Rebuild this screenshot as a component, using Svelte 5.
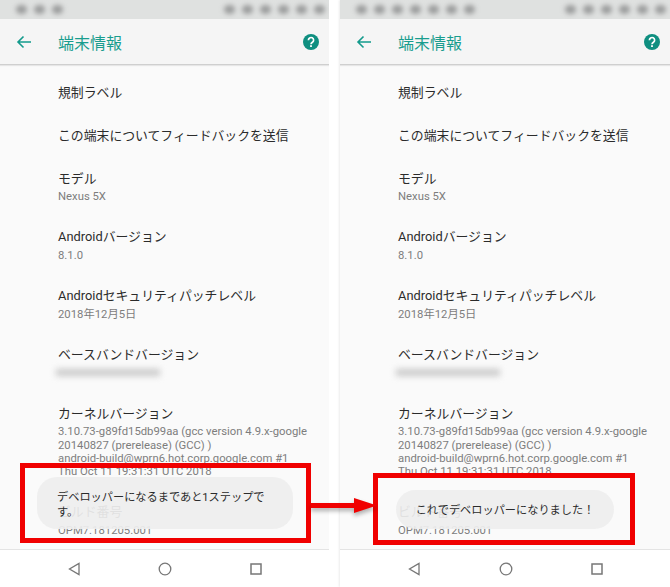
<script>
	const rows = [
		{ label: '規制ラベル' },
		{ label: 'この端末についてフィードバックを送信' },
		{ label: 'モデル', lines: ['Nexus 5X'] },
		{ label: 'Androidバージョン', lines: ['8.1.0'] },
		{ label: 'Androidセキュリティパッチレベル', lines: ['2018年12月5日'] },
		{ label: 'ベースバンドバージョン', blurred: true },
		{
			label: 'カーネルバージョン',
			lines: [
				'3.10.73-g89fd15db99aa (gcc version 4.9.x-google',
				'20140827 (prerelease) (GCC) )',
				'android-build@wprn6.hot.corp.google.com #1',
				'Thu Oct 11 19:31:31 UTC 2018'
			]
		},
		{ label: 'ビルド番号', lines: ['OPM7.181205.001'] }
	]
</script>

{#snippet phone(side, toast)}
	<section class="phone {side}">
		<div class="statusbar">
			<div class="blobs">
				{#each { length: side === 'left' ? 3 : 7 } as _}
					<i></i>
				{/each}
			</div>
			<div class="blobs">
				{#each { length: 6 } as _}
					<i></i>
				{/each}
			</div>
		</div>
		<header class="toolbar">
			<svg class="back" viewBox="0 0 16 14" width="16" height="14">
				<path d="M15 7H2M7.5 1.5 2 7l5.5 5.5" fill="none" stroke="#139a8c" stroke-width="1.6" />
			</svg>
			<h1>端末情報</h1>
			<svg class="help" viewBox="0 0 16 16" width="16" height="16">
				<circle cx="8" cy="8" r="8" fill="#0f8f80" />
				<path d="M5.4 6.2a2.6 2.6 0 1 1 4 2.1c-.9.6-1.4 1-1.4 2" fill="none" stroke="#fff" stroke-width="1.7" />
				<rect x="7.1" y="11.2" width="1.8" height="1.8" fill="#fff" />
			</svg>
		</header>
		<div class="list">
			{#each rows as row}
				<div class="row">
					<div class="label">{row.label}</div>
					{#if row.blurred}
						<div class="smudge"></div>
					{/if}
					{#each row.lines ?? [] as line}
						<div class="sub">{line}</div>
					{/each}
				</div>
			{/each}
		</div>
		<nav class="navbar">
			<svg viewBox="0 0 12 14" width="12" height="14">
				<path d="M11 1.5v11L1.5 7z" fill="none" stroke="#777" stroke-width="1.3" />
			</svg>
			<svg viewBox="0 0 14 14" width="14" height="14">
				<circle cx="7" cy="7" r="5.8" fill="none" stroke="#777" stroke-width="1.3" />
			</svg>
			<svg viewBox="0 0 12 12" width="12" height="12">
				<rect x="1" y="1" width="10" height="10" fill="none" stroke="#777" stroke-width="1.5" />
			</svg>
		</nav>
		<div class="toast"><span>{toast}</span></div>
		<div class="callout"></div>
		{#if side === 'right'}
			<div class="watermark">4thsight.xyz</div>
		{/if}
	</section>
{/snippet}

<main class="page">
	{@render phone('left', 'デベロッパーになるまであと1ステップです。')}
	{@render phone('right', 'これでデベロッパーになりました！')}
	<svg class="arrow" viewBox="0 0 66 15" width="66" height="15">
		<rect x="0" y="5" width="46" height="5" fill="#f00000" />
		<path d="M43 0 66 7.5 43 15z" fill="#f00000" />
	</svg>
</main>

<style>
	:global(body) {
		background: #fff;
	}

	.page {
		position: relative;
		display: flex;
		justify-content: space-between;
		width: 670px;
		height: 587px;
		overflow: hidden;
		font-family: Roboto, 'Noto Sans CJK JP', sans-serif;
		background: #fff;
	}

	.phone {
		position: relative;
		display: flex;
		flex-direction: column;
		width: 329px;
		height: 587px;
		overflow: hidden;
		background: #fafafa;
	}

	.phone.right {
		width: 330px;
		box-shadow: -1px 0 2px rgba(0, 0, 0, 0.08);
	}

	.statusbar {
		display: flex;
		justify-content: space-between;
		align-items: center;
		height: 19px;
		padding: 0 4px 0 16px;
		background: #dfe1e0;
		overflow: hidden;
	}

	.blobs {
		display: flex;
		gap: 7px;
		filter: blur(2.5px);
	}

	.blobs i {
		width: 11px;
		height: 9px;
		border-radius: 50%;
		background: #999a9a;
	}

	.toolbar {
		position: relative;
		display: flex;
		align-items: center;
		height: 46px;
		padding: 0 10px 0 16px;
		background: #f5f5f5;
		border-bottom: 1px solid #cfcfcf;
		box-shadow: 0 1px 1px rgba(0, 0, 0, 0.08);
		box-sizing: border-box;
	}

	.back {
		margin-right: 26px;
	}

	h1 {
		flex: 1;
		margin: 0;
		font-size: 16px;
		font-weight: 400;
		color: #199d8e;
	}

	.list {
		flex: 1;
		padding: 6px 0 0 58px;
		overflow: hidden;
	}

	.row {
		padding: 12.5px 0;
	}

	.label {
		font-size: 12.85px;
		line-height: 18px;
		color: #2b2b2b;
		white-space: nowrap;
	}

	.label + .sub {
		margin-top: 2.7px;
	}

	.sub {
		font-size: 11.3px;
		line-height: 13.25px;
		color: #7d7d7d;
		white-space: nowrap;
	}

	.smudge {
		width: 104px;
		height: 7px;
		margin: 5px 0 3.4px -2px;
		background: #c9c9c9;
		filter: blur(3px);
	}

	.navbar {
		display: flex;
		justify-content: space-between;
		align-items: center;
		height: 38px;
		padding: 0 67px 0 68px;
		background: #fff;
		border-top: 1px solid #e4e4e4;
		box-sizing: border-box;
	}

	.toast {
		position: absolute;
		box-sizing: border-box;
		font-size: 11.2px;
		line-height: 15px;
		color: #2b2b2b;
		background: rgba(238, 238, 238, 0.93);
		border-radius: 20px;
	}

	.left .toast {
		left: 37px;
		top: 477px;
		width: 256px;
		height: 52px;
		padding: 13px 20px;
	}

	.right .toast {
		left: 56px;
		top: 490px;
		width: 218px;
		height: 39px;
		padding: 13px 0;
		text-align: center;
	}

	.callout {
		position: absolute;
		box-sizing: border-box;
		border: 5px solid #f00000;
	}

	.left .callout {
		left: 20px;
		top: 463px;
		width: 291px;
		height: 80px;
	}

	.right .callout {
		left: 33px;
		top: 473px;
		width: 262px;
		height: 72px;
	}

	.watermark {
		position: absolute;
		left: 196px;
		top: 556px;
		font-size: 20px;
		font-weight: 700;
		font-style: italic;
		color: #fafafa;
		z-index: -1;
	}

	.arrow {
		position: absolute;
		left: 311px;
		top: 498px;
		filter: drop-shadow(0 3px 2px rgba(0, 0, 0, 0.3));
	}
</style>
